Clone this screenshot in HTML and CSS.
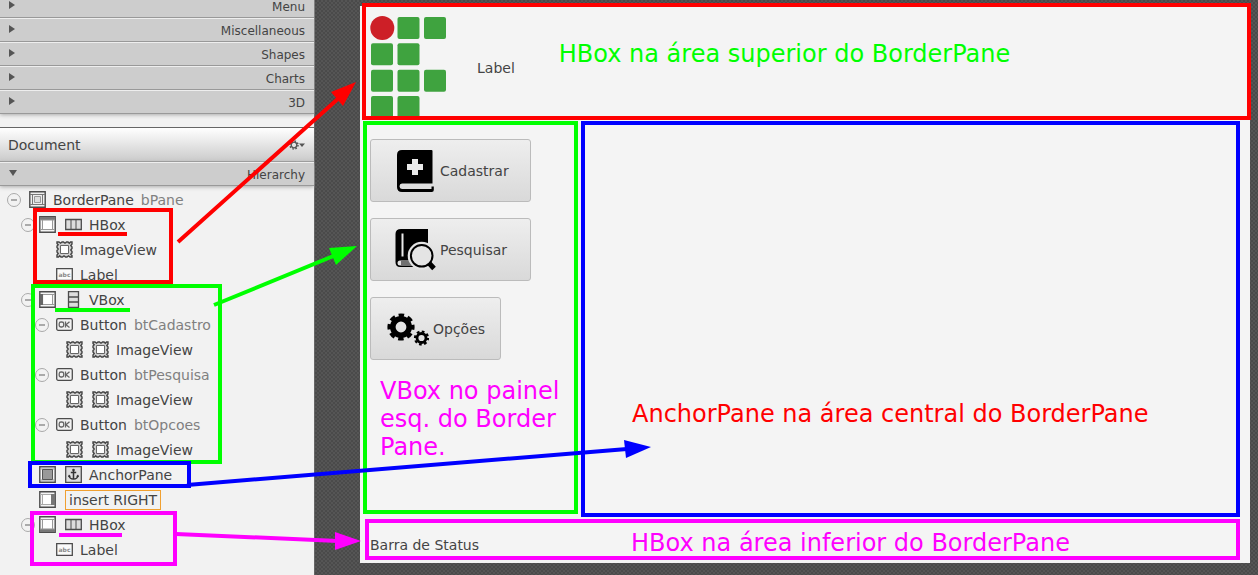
FILE: index.html
```html
<!DOCTYPE html>
<html lang="pt-BR">
<head>
<meta charset="utf-8">
<title>BorderPane</title>
<link rel="stylesheet" href="styles.css">
</head>
<body>
<svg class="defs" aria-hidden="true">
  <defs>
    <symbol id="border" viewBox="0 0 17 17"><path d="M.8.8h15.4v15.4H.8z" fill="#eee" stroke="#4c4c4c" stroke-width="1.4"/><path d="M1 3.5h15M1 13.5h15M3.5 3.5v10M13.5 3.5v10" stroke="#777" fill="none"/><path d="M5.5 5.500h6v6h-6z" fill="#ddd" stroke="#999"/></symbol>
    <symbol id="top" viewBox="0 0 17 17"><path d="M.8.8h15.4v15.4H.8z" fill="#f4f4f4" stroke="#4c4c4c" stroke-width="1.4"/><path d="M1 1h15v3H1z" fill="#777"/><path d="M1 4h15M1 13.5h15M3.5 4v10M13.5 4v10" stroke="#999" fill="none"/><path d="M4 5h9v8H4z" fill="#fff"/></symbol>
    <symbol id="left" viewBox="0 0 17 17"><path d="M.8.8h15.4v15.4H.8z" fill="#f4f4f4" stroke="#4c4c4c" stroke-width="1.4"/><path d="M1 3.5h15M1 13.5h15M13.5 3v10" stroke="#999" fill="none"/><path d="M1 3h3v11H1z" fill="#666"/><path d="M5 4h8v9H5z" fill="#fff"/></symbol>
    <symbol id="right" viewBox="0 0 17 17"><path d="M.8.8h15.4v15.4H.8z" fill="#f4f4f4" stroke="#4c4c4c" stroke-width="1.4"/><path d="M1 3.5h15M1 13.5h15M3.5 3v10" stroke="#aaa" fill="none"/><path d="M12 3h4v11h-4z" fill="#777"/><path d="M4 4h8v9H4z" fill="#fff"/></symbol>
    <symbol id="center" viewBox="0 0 17 17"><path d="M.8.8h15.4v15.4H.8z" fill="#f4f4f4" stroke="#4c4c4c" stroke-width="1.4"/><path d="M1 3h15M1 14h15" stroke="#999"/><path d="M3.5 3.5h10v10h-10z" fill="#999" stroke="#555"/></symbol>
    <symbol id="bottom" viewBox="0 0 17 17"><path d="M.8.8h15.4v15.4H.8z" fill="#f4f4f4" stroke="#4c4c4c" stroke-width="1.4"/><path d="M1 13h15v3H1z" fill="#777"/><path d="M1 3.5h15M1 13h15M3.5 3v10M13.5 3v10" stroke="#999" fill="none"/><path d="M4 4h9v8H4z" fill="#fff"/></symbol>
    <symbol id="hbox" viewBox="0 0 17 17"><path d="M.7 3.5h15.6v10H.7z" fill="#ddd" stroke="#4c4c4c" stroke-width="1.3"/><path d="M6 3.5v10M11 3.5v10" stroke="#4c4c4c"/></symbol>
    <symbol id="vbox" viewBox="0 0 17 17"><path d="M3.5.7h10v15.6h-10z" fill="#ddd" stroke="#4c4c4c" stroke-width="1.3"/><path d="M3.5 6h10M3.5 11h10" stroke="#4c4c4c" stroke-width="1.3"/></symbol>
    <symbol id="image" viewBox="0 0 17 17"><path d="M1 1h2l1.5 1.2L6 1h1.500L9 2.200 10.500 1H12l1.300 1.200L14.500 1H16v2l-1.200 1.500L16 6v1.500L14.800 9 16 10.500V12l-1.200 1.300L16 14.500V16h-2l-1.500-1.200L11 16H9.500L8 14.800 6.500 16H5l-1.300-1.200L2.500 16H1v-2l1.200-1.500L1 11V9.500L2.200 8 1 6.500V5l1.200-1.300L1 2.500z" fill="#d0d0d0" stroke="#444" stroke-width="1.4"/><path d="M4.500 4.500h8v8h-8z" fill="#fff" stroke="#666"/></symbol>
    <symbol id="label" viewBox="0 0 17 17"><path d="M.7 2.700h15.600v11.600H.7z" fill="#fafafa" stroke="#4c4c4c" stroke-width="1.3"/><text x="8.5" y="11" text-anchor="middle" class="glyph">abc</text></symbol>
    <symbol id="ok" viewBox="0 0 17 17"><rect x=".7" y="2.700" width="15.600" height="11.600" rx="1.500" fill="#f2f2f2" stroke="#4c4c4c" stroke-width="1.3"/><g fill="none" stroke="#666" stroke-width="1.3"><rect x="3.200" y="6" width="4.500" height="5" rx="1.800"/><path d="M9.500 5.500v6M13.500 5.700l-3.500 3 3.500 2.700"/></g></symbol>
    <symbol id="anchor" viewBox="0 0 17 17"><path d="M.7.7h15.600v15.600H.7z" fill="#ddd" stroke="#4c4c4c" stroke-width="1.3"/><path d="M8.500 5v8M5.800 6.500h5.400M4 9.500c.3 2.300 2 3.500 4.500 3.500s4.200-1.200 4.500-3.500" fill="none" stroke="#333" stroke-width="1.5"/><circle cx="8.500" cy="4" r="1.300" fill="#333"/><path d="M3 11l1-2.500L6 10.500zM14 11l-1-2.500-2 2z" fill="#333"/></symbol>
  </defs>
</svg>

<div class="app">
  <aside class="sidebar">
    <div class="library">
      <button class="section"><span class="tri"></span>Menu</button>
      <button class="section"><span class="tri"></span>Miscellaneous</button>
      <button class="section"><span class="tri"></span>Shapes</button>
      <button class="section"><span class="tri"></span>Charts</button>
      <button class="section"><span class="tri"></span>3D</button>
    </div>
    <header class="document">
      <h2>Document</h2>
      <button class="gear" aria-label="Options">
        <svg width="16" height="10" viewBox="0 0 16 10"><circle cx="5" cy="5" r="2.800" fill="none" stroke="#555" stroke-width="1.300"/><circle cx="5" cy="5" r="4" fill="none" stroke="#555" stroke-width="1.500" stroke-dasharray="1.570 1.570"/><path d="M10 3.500h6L13 7z" fill="#555"/></svg>
      </button>
    </header>
    <button class="section open"><span class="tri down"></span>Hierarchy</button>
    <ul class="tree">
      <li class="root"><button class="toggle" aria-label="Collapse"></button><svg class="ico"><use href="#border"/></svg><span>BorderPane</span><span class="id">bPane</span></li>
      <li class="slot"><button class="toggle" aria-label="Collapse"></button><svg class="ico"><use href="#top"/></svg><svg class="ico"><use href="#hbox"/></svg><span>HBox</span></li>
      <li class="leaf"><svg class="ico"><use href="#image"/></svg><span>ImageView</span></li>
      <li class="leaf"><svg class="ico"><use href="#label"/></svg><span>Label</span></li>
      <li class="slot"><button class="toggle" aria-label="Collapse"></button><svg class="ico"><use href="#left"/></svg><svg class="ico"><use href="#vbox"/></svg><span>VBox</span></li>
      <li class="branch"><button class="toggle" aria-label="Collapse"></button><svg class="ico"><use href="#ok"/></svg><span>Button</span><span class="id">btCadastro</span></li>
      <li class="deep"><svg class="ico"><use href="#image"/></svg><svg class="ico"><use href="#image"/></svg><span>ImageView</span></li>
      <li class="branch"><button class="toggle" aria-label="Collapse"></button><svg class="ico"><use href="#ok"/></svg><span>Button</span><span class="id">btPesquisa</span></li>
      <li class="deep"><svg class="ico"><use href="#image"/></svg><svg class="ico"><use href="#image"/></svg><span>ImageView</span></li>
      <li class="branch"><button class="toggle" aria-label="Collapse"></button><svg class="ico"><use href="#ok"/></svg><span>Button</span><span class="id">btOpcoes</span></li>
      <li class="deep"><svg class="ico"><use href="#image"/></svg><svg class="ico"><use href="#image"/></svg><span>ImageView</span></li>
      <li class="slot bare"><svg class="ico"><use href="#center"/></svg><svg class="ico"><use href="#anchor"/></svg><span>AnchorPane</span></li>
      <li class="slot bare"><svg class="ico"><use href="#right"/></svg><span class="insert">insert RIGHT</span></li>
      <li class="slot"><button class="toggle" aria-label="Collapse"></button><svg class="ico"><use href="#bottom"/></svg><svg class="ico"><use href="#hbox"/></svg><span>HBox</span></li>
      <li class="leaf"><svg class="ico"><use href="#label"/></svg><span>Label</span></li>
    </ul>
  </aside>

  <main class="canvas">
    <div class="pane">
      <section class="pane-top">
        <svg class="logo" width="80" height="100" viewBox="0 0 80 100" role="img" aria-label="Logo">
          <circle cx="12.300" cy="12" r="12" fill="#cd1f27"/>
          <g fill="#3fa33f">
            <rect x="27.500" y="1" width="22" height="22" rx="2"/><rect x="54" y="1" width="22" height="22" rx="2"/>
            <rect x="1" y="27.300" width="22" height="22" rx="2"/><rect x="27.500" y="27.300" width="22" height="22" rx="2"/>
            <rect x="1" y="53.700" width="22" height="22" rx="2"/><rect x="27.500" y="53.700" width="22" height="22" rx="2"/><rect x="54" y="53.700" width="22" height="22" rx="2"/>
            <rect x="1" y="80" width="22" height="22" rx="2"/><rect x="27.500" y="80" width="22" height="22" rx="2"/>
          </g>
        </svg>
        <span class="pane-label">Label</span>
        <p class="note green">HBox na área superior do BorderPane</p>
      </section>
      <div class="pane-middle">
        <section class="pane-left">
          <button class="action">
            <svg width="42" height="42" viewBox="0 0 42 42"><path d="M8 0h29.500q1 0 1 1v32.500H8q-2.500.3-2.500 2.700T8 39h29.500v-2.500h2.300V40q0 2-2 2H8q-5 0-5-5V5q0-5 5-5z"/><path d="M18 9h6v5h5v6h-5v5h-6v-5h-5v-6h5z" fill="#eaeaea"/></svg>
            Cadastrar
          </button>
          <button class="action">
            <svg width="42" height="42" viewBox="0 0 42 42"><path d="M7 0h27v33l-6 5H6q-4.500 0-4.500-5V5Q1.500 0 7 0z"/><path d="M8.500 4.500v23" stroke="#eaeaea" stroke-width="2"/><path d="M6 31.500h20V36.500H6q-2.500 0-2.500-2.500T6 31.500z" fill="#e2e2e2"/><path d="M7 33h10M7 35h12" stroke="#000"/><circle cx="27.700" cy="26.800" r="14" fill="#e4e4e4"/><path d="M34.500 33.500l5.500 6" stroke="#000" stroke-width="5"/><circle cx="27.700" cy="26.800" r="10.800" fill="#e4e4e4" stroke="#000" stroke-width="2"/></svg>
            Pesquisar
          </button>
          <button class="action compact">
            <svg width="42" height="42" viewBox="0 0 42 42" fill="none" stroke="#000"><circle cx="14" cy="19" r="8.200" stroke-width="5.600"/><circle cx="14" cy="19" r="11.700" stroke-width="3.800" stroke-dasharray="5.400 3.789" stroke-dashoffset="2.700"/><circle cx="34.500" cy="30" r="4.500" stroke-width="2.800"/><circle cx="34.500" cy="30" r="6.500" stroke-width="2.200" stroke-dasharray="2.700 2.405" stroke-dashoffset="0.500"/></svg>
            Opções
          </button>
          <p class="note magenta">VBox no painel esq. do Border Pane.</p>
        </section>
        <section class="pane-center">
          <p class="note red">AnchorPane na área central do BorderPane</p>
        </section>
      </div>
      <footer class="pane-bottom">
        <span class="status">Barra de Status</span>
        <p class="note magenta">HBox na área inferior do BorderPane</p>
      </footer>
    </div>
  </main>

  <svg class="marks" width="660" height="575" viewBox="0 0 660 575" fill="none" stroke-width="4" aria-hidden="true">
    <g stroke="#f00"><rect x="35" y="210" width="136" height="72"/><path d="M58 234h69M178 242L340 97"/><path d="M356 82l-25 10 12 14z" fill="#f00" stroke="none"/></g>
    <g stroke="#0f0"><rect x="33" y="286" width="187" height="176"/><path d="M55 310h75M214 305l122-50"/><path d="M357 246l-28 2 7 17z" fill="#0f0" stroke="none"/></g>
    <g stroke="#00f"><rect x="30" y="463" width="159" height="23"/><path d="M187 485l440-36"/><path d="M651 447l-27-7 2 18z" fill="#00f" stroke="none"/></g>
    <g stroke="#f0f"><rect x="32" y="513" width="143" height="51"/><path d="M59 535h63M176 534l162 7"/><path d="M361 541l-26-9v18z" fill="#f0f" stroke="none"/></g>
  </svg>
</div>
</body>
</html>
```
FILE: styles.css
```css
* { box-sizing: border-box; }

body {
  margin: 0;
  font: 14px/18px "DejaVu Sans", sans-serif;
  color: #444;
  background: #f2f2f2;
}

button {
  font: inherit;
  color: inherit;
  margin: 0;
  padding: 0;
  border: 0;
  background: none;
}

.defs { position: absolute; width: 0; height: 0; }
.glyph { font: bold 6px "DejaVu Sans", sans-serif; fill: #888; }

.app {
  position: relative;
  display: flex;
  min-height: 100vh;
  overflow: hidden;
}

/* Sidebar */
.sidebar {
  flex: none;
  width: 315px;
  border-right: 1px solid #666;
  background: #f2f2f2;
}

.library {
  margin: -6px 0 13px;
  box-shadow: 0 1px 4px #aaa;
}

.section {
  display: flex;
  align-items: center;
  justify-content: space-between;
  width: 100%;
  height: 24px;
  padding: 2px 9px 0 9px;
  border-top: 1px solid #eee;
  border-bottom: 1px solid #999;
  background: #cdcdcd;
  font-size: 12px;
}

.section.open { box-shadow: 0 1px 4px #aaa; }

.tri {
  margin-bottom: 4px;
  border-left: 6px solid #555;
  border-top: 4px solid transparent;
  border-bottom: 4px solid transparent;
}

.tri.down {
  border-top: 6px solid #555;
  border-left: 4px solid transparent;
  border-right: 4px solid transparent;
  border-bottom: 0;
}

.document {
  display: flex;
  align-items: center;
  justify-content: space-between;
  height: 35px;
  padding: 0 9px 0 8px;
  border-top: 1px solid #666;
  border-bottom: 1px solid #999;
  background: linear-gradient(#fff, #cbcbcb);
}

.document h2 { margin: 0; font-size: 14px; font-weight: normal; }
.gear { display: flex; }

.tree {
  margin: 0;
  padding: 1px 0 0;
  list-style: none;
}

.tree li {
  display: flex;
  align-items: center;
  height: 25px;
  white-space: nowrap;
}

.tree span { margin-left: 7px; }
.tree .id { color: #808080; }
.root { padding-left: 7px; }
.slot { padding-left: 21px; }
.slot.bare { padding-left: 39px; }
.branch { padding-left: 35px; }
.leaf { padding-left: 56px; }
.deep { padding-left: 66px; }

.ico { flex: none; width: 17px; height: 17px; }
.ico + .ico { margin-left: 9px; }

.toggle {
  flex: none;
  display: grid;
  place-items: center;
  width: 14px;
  height: 14px;
  margin-right: 7px;
  border: 1px solid #aaa;
  border-radius: 50%;
}

.toggle::before { content: ""; width: 6px; height: 2px; background: #aaa; }
.root .toggle { margin-right: 8px; }
.slot .toggle { margin-right: 4px; }

.tree .insert {
  margin-left: 9px;
  padding: 0 3px;
  border: 1px solid #f0a030;
}

/* Design canvas */
.canvas {
  flex: 1;
  display: flex;
  padding: 6px 8px 12px 45px;
  background: repeating-conic-gradient(#555 0 25%, #4a4a4a 0 50%) 0 0 / 4px 4px;
}

.pane {
  flex: 1;
  display: flex;
  flex-direction: column;
  padding: 0 10px 3px 3px;
  background: #f4f4f4;
}

.pane-top {
  display: flex;
  height: 117px;
  margin: -3px -11px 1px -1px;
  padding: 9px 0 0 4px;
  border: 4px solid #f00;
}

.logo { flex: none; }
.pane-label { margin: 43px 44px 0 27px; }

.note { margin: 0; font-size: 24px; line-height: 28px; }
.note.green { color: #0f0; }
.note.magenta { color: #f0f; }
.note.red { color: #f00; }
.pane-top .note { margin-top: 24px; }

.pane-middle { flex: 1; display: flex; gap: 3px; }

.pane-left {
  display: flex;
  flex-direction: column;
  align-items: flex-start;
  gap: 16px;
  width: 215px;
  margin-bottom: 3px;
  padding: 14px 3px;
  border: 4px solid #0f0;
}

.action {
  display: flex;
  align-items: center;
  gap: 4px;
  min-width: 161px;
  height: 63px;
  padding: 0 20px 0 23px;
  border: 1px solid #bbb;
  border-radius: 3px;
  background: linear-gradient(#eee, #d9d9d9);
}

.action.compact { min-width: 0; padding: 0 15px 0 16px; }
.pane-left .note { padding: 1px 0 0 10px; }

.pane-center {
  flex: 1;
  padding: 275px 0 0 47px;
  border: 4px solid #00f;
}

.pane-bottom {
  display: flex;
  align-items: center;
  gap: 152px;
  height: 41px;
  margin: 2px 0 0 2px;
  padding: 10px 0 0 1px;
  border: 4px solid #f0f;
}

.pane-bottom .note { margin-top: -3px; }

/* Callout boxes and arrows drawn over the interface */
.marks { position: absolute; top: 0; left: 0; pointer-events: none; }
```
